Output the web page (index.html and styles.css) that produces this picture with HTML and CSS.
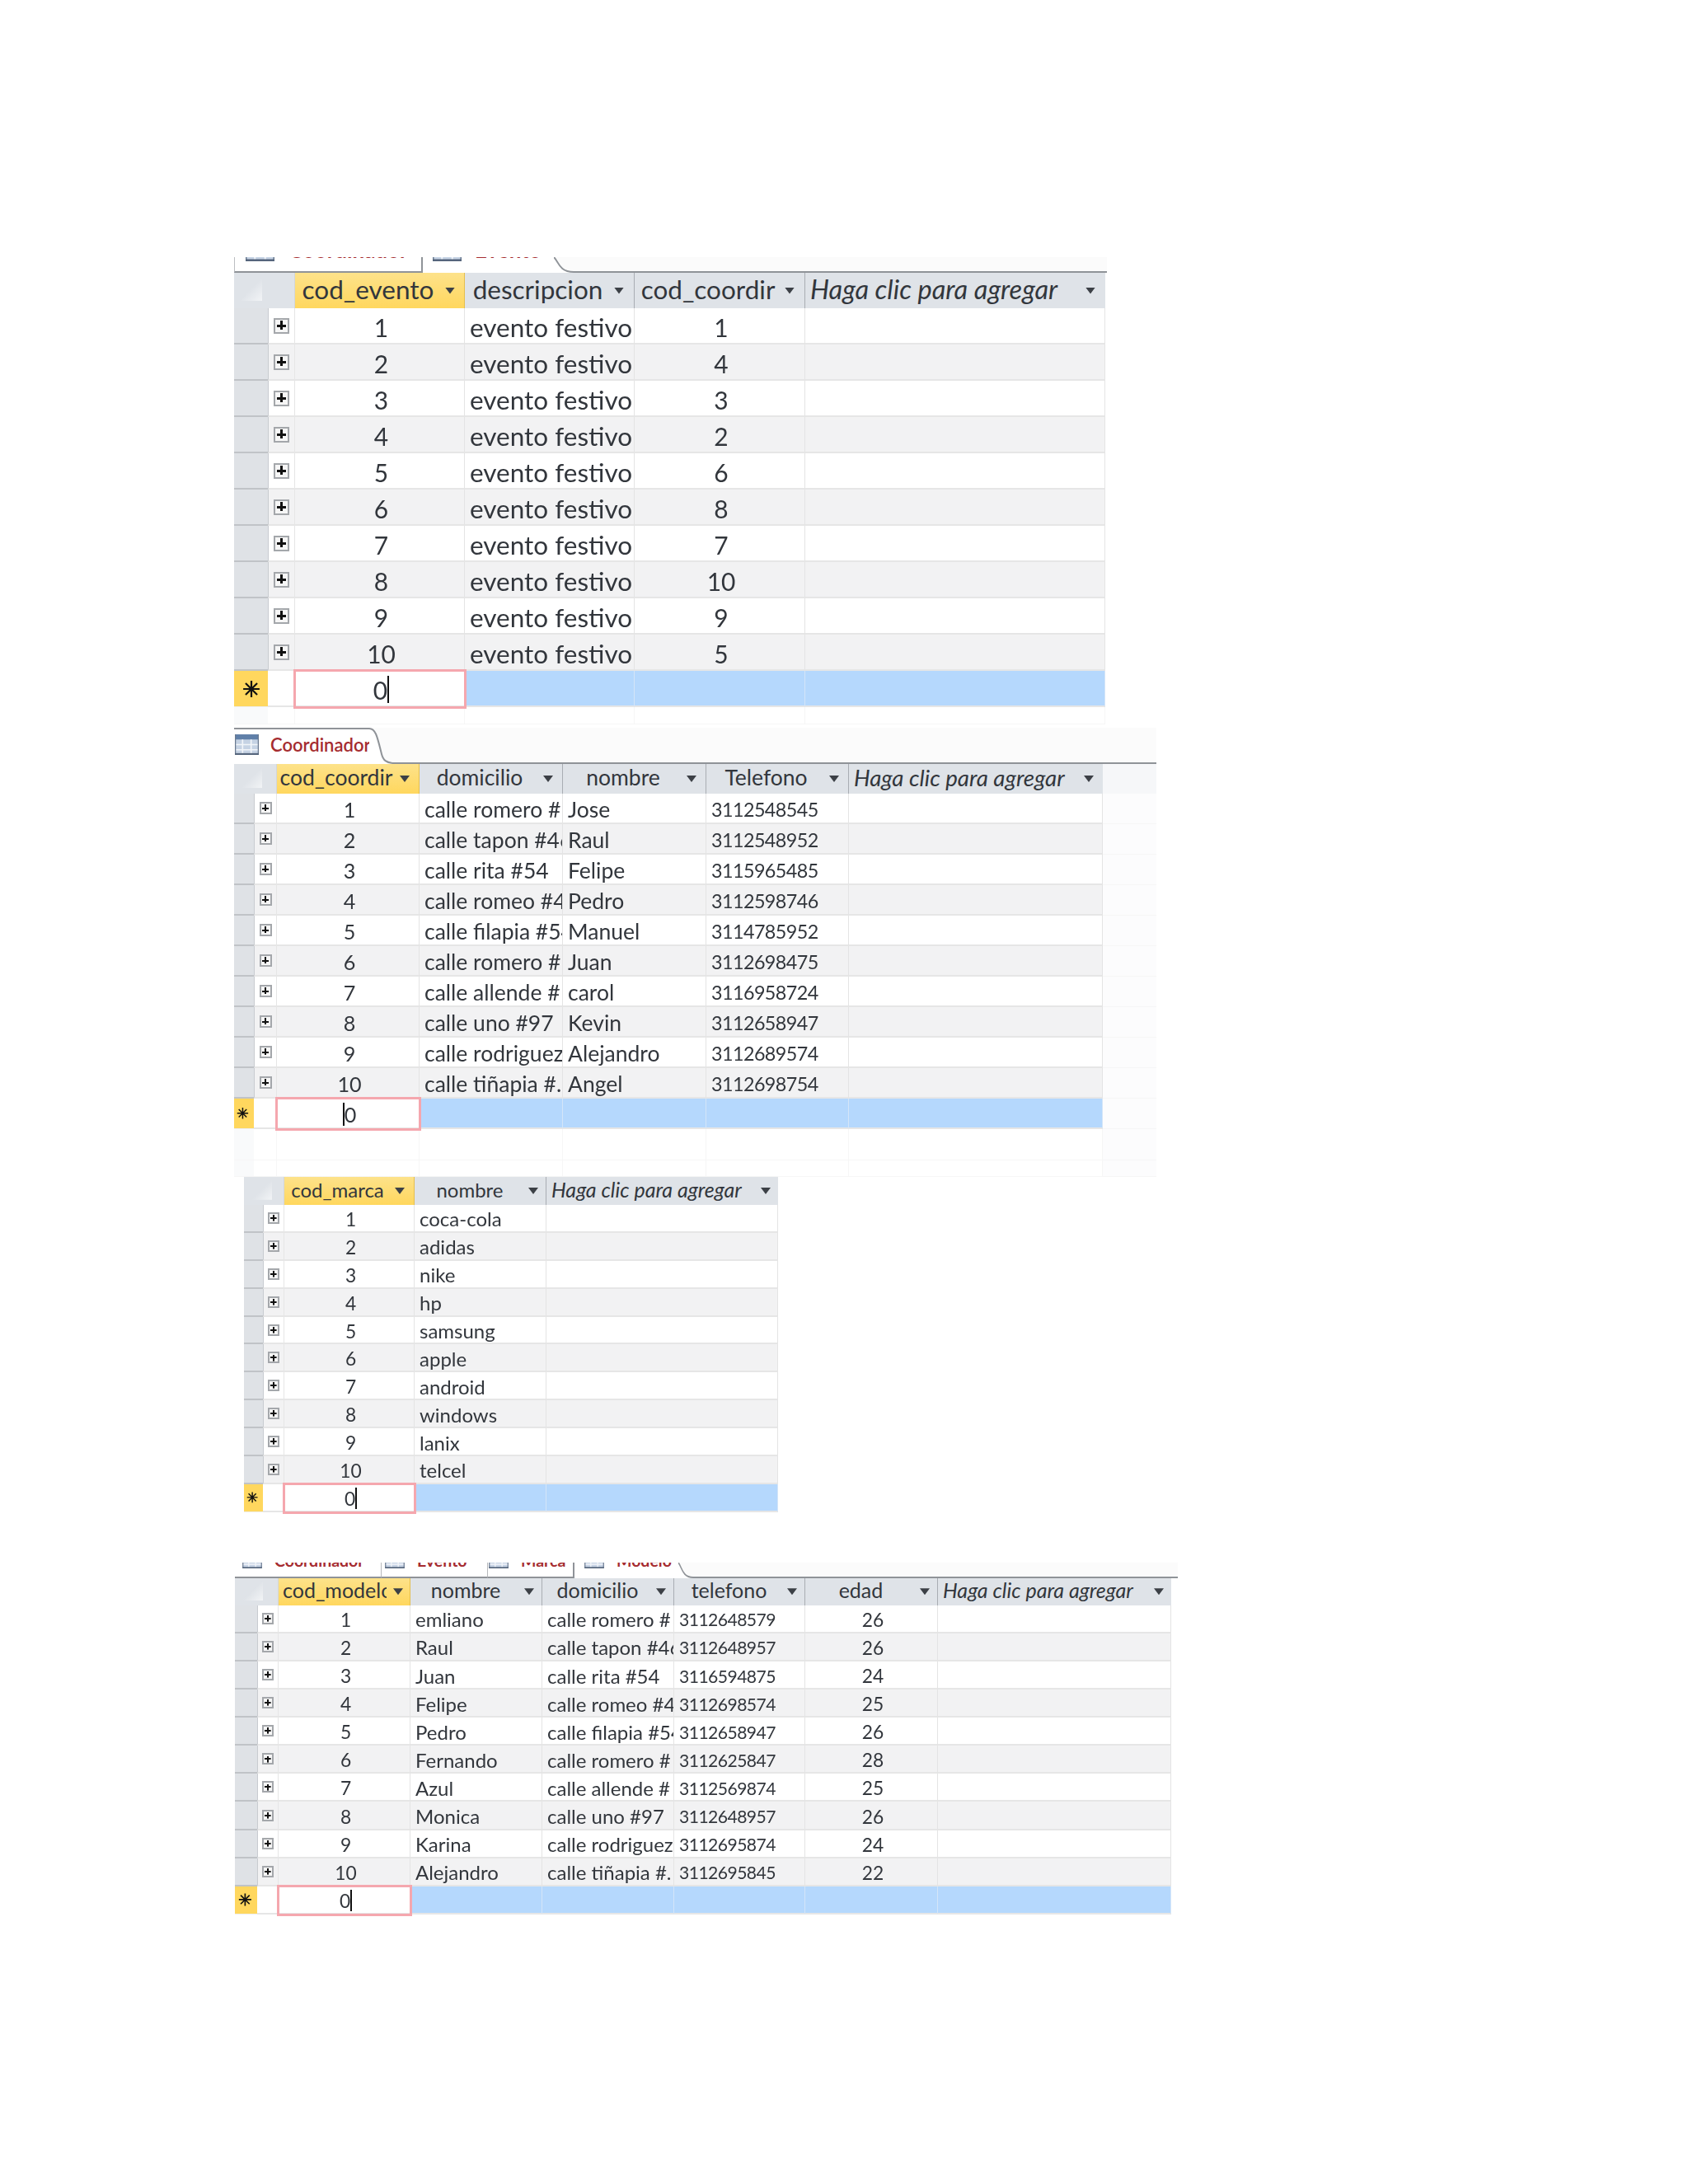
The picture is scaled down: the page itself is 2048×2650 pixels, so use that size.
FILE: index.html
```html
<!DOCTYPE html>
<html lang="es">
<head>
<meta charset="utf-8">
<title>Tablas</title>
<link rel="stylesheet" href="styles.css">
</head>
<body>
<svg class="defs" width="0" height="0" aria-hidden="true">
  <symbol id="ico" viewBox="0 0 28 24">
    <rect x="0" y="0" width="28" height="24" fill="#c6d3e4"/>
    <rect x="0" y="0" width="28" height="6" fill="#5f7fa8"/>
    <path d="M0 12h28M0 18h28M9 6v18M19 6v18" stroke="#f2f5f9" stroke-width="1.6"/>
    <path d="M.5 0v24h27V0" fill="none" stroke="#6a7a90" stroke-width="1.4"/>
    <path d="M0 23h28" stroke="#55657c" stroke-width="2"/>
  </symbol>
  <symbol id="ast" viewBox="0 0 20 20">
    <path d="M10 1v18M1 10h18M3.6 3.6l12.8 12.8M16.4 3.6L3.6 16.4" stroke="#111" stroke-width="2" fill="none"/>
  </symbol>
</svg>
<main class="page">

<section class="sheet s1">
  <div class="tabs">
    <div class="tab off"><svg class="ti"><use href="#ico"/></svg><span class="tl">Coordinador</span></div>
    <div class="tab on"><svg class="ti"><use href="#ico"/></svg><span class="tl">Evento</span></div>
    <svg class="curve" viewBox="0 0 24 20" preserveAspectRatio="none"><path d="M0 0C6 6 6 19 24 19.5V20H0Z" fill="#fff"/><path d="M0 0C6 6 6 18.5 24 19" fill="none" stroke="#8f9398" stroke-width="2"/></svg>
  </div>
  <div class="row head">
    <div class="corner"></div>
    <div class="h pick"><span class="hl">cod_evento</span><i class="arr"></i></div>
    <div class="h"><span class="hl">descripcion</span><i class="arr"></i></div>
    <div class="h"><span class="hl">cod_coordir</span><i class="arr"></i></div>
    <div class="h add"><span class="hl">Haga clic para agregar</span><i class="arr"></i></div>
  </div>
  <div class="row"><div class="sel"></div><div class="exp"><i class="plus"></i></div><div class="c n">1</div><div class="c">evento festivo</div><div class="c n">1</div><div class="c"></div></div>
  <div class="row alt"><div class="sel"></div><div class="exp"><i class="plus"></i></div><div class="c n">2</div><div class="c">evento festivo</div><div class="c n">4</div><div class="c"></div></div>
  <div class="row"><div class="sel"></div><div class="exp"><i class="plus"></i></div><div class="c n">3</div><div class="c">evento festivo</div><div class="c n">3</div><div class="c"></div></div>
  <div class="row alt"><div class="sel"></div><div class="exp"><i class="plus"></i></div><div class="c n">4</div><div class="c">evento festivo</div><div class="c n">2</div><div class="c"></div></div>
  <div class="row"><div class="sel"></div><div class="exp"><i class="plus"></i></div><div class="c n">5</div><div class="c">evento festivo</div><div class="c n">6</div><div class="c"></div></div>
  <div class="row alt"><div class="sel"></div><div class="exp"><i class="plus"></i></div><div class="c n">6</div><div class="c">evento festivo</div><div class="c n">8</div><div class="c"></div></div>
  <div class="row"><div class="sel"></div><div class="exp"><i class="plus"></i></div><div class="c n">7</div><div class="c">evento festivo</div><div class="c n">7</div><div class="c"></div></div>
  <div class="row alt"><div class="sel"></div><div class="exp"><i class="plus"></i></div><div class="c n">8</div><div class="c">evento festivo</div><div class="c n">10</div><div class="c"></div></div>
  <div class="row"><div class="sel"></div><div class="exp"><i class="plus"></i></div><div class="c n">9</div><div class="c">evento festivo</div><div class="c n">9</div><div class="c"></div></div>
  <div class="row alt"><div class="sel"></div><div class="exp"><i class="plus"></i></div><div class="c n">10</div><div class="c">evento festivo</div><div class="c n">5</div><div class="c"></div></div>
  <div class="row new"><div class="sel"><svg class="star"><use href="#ast"/></svg></div><div class="exp"></div><div class="c n edit">0<b class="caret"></b></div><div class="c"></div><div class="c"></div><div class="c"></div></div>
  <div class="row blank"><div class="sel"></div><div class="exp"></div><div class="c"></div><div class="c"></div><div class="c"></div><div class="c"></div></div>
</section>

<section class="sheet s2">
  <div class="tabs">
    <div class="tab on"><svg class="ti"><use href="#ico"/></svg><span class="tl">Coordinador</span></div>
    <svg class="curve" viewBox="0 0 28 44" preserveAspectRatio="none"><path d="M0 1C8 1 10 12 15 32C17 40 21 42 28 43V44H0Z" fill="#fff"/><path d="M0 1C8 1 10 12 15 32C17 40 21 42 28 43" fill="none" stroke="#8f9398" stroke-width="2"/></svg>
  </div>
  <div class="row head">
    <div class="corner"></div>
    <div class="h pick"><span class="hl">cod_coordir</span><i class="arr"></i></div>
    <div class="h"><span class="hl">domicilio</span><i class="arr"></i></div>
    <div class="h"><span class="hl">nombre</span><i class="arr"></i></div>
    <div class="h"><span class="hl">Telefono</span><i class="arr"></i></div>
    <div class="h add"><span class="hl">Haga clic para agregar</span><i class="arr"></i></div>
  </div>
  <div class="row"><div class="sel"></div><div class="exp"><i class="plus"></i></div><div class="c n">1</div><div class="c">calle romero #</div><div class="c">Jose</div><div class="c d">3112548545</div><div class="c"></div></div>
  <div class="row alt"><div class="sel"></div><div class="exp"><i class="plus"></i></div><div class="c n">2</div><div class="c">calle tapon #46</div><div class="c">Raul</div><div class="c d">3112548952</div><div class="c"></div></div>
  <div class="row"><div class="sel"></div><div class="exp"><i class="plus"></i></div><div class="c n">3</div><div class="c">calle rita #54</div><div class="c">Felipe</div><div class="c d">3115965485</div><div class="c"></div></div>
  <div class="row alt"><div class="sel"></div><div class="exp"><i class="plus"></i></div><div class="c n">4</div><div class="c">calle romeo #4</div><div class="c">Pedro</div><div class="c d">3112598746</div><div class="c"></div></div>
  <div class="row"><div class="sel"></div><div class="exp"><i class="plus"></i></div><div class="c n">5</div><div class="c">calle filapia #54</div><div class="c">Manuel</div><div class="c d">3114785952</div><div class="c"></div></div>
  <div class="row alt"><div class="sel"></div><div class="exp"><i class="plus"></i></div><div class="c n">6</div><div class="c">calle romero #</div><div class="c">Juan</div><div class="c d">3112698475</div><div class="c"></div></div>
  <div class="row"><div class="sel"></div><div class="exp"><i class="plus"></i></div><div class="c n">7</div><div class="c">calle allende #</div><div class="c">carol</div><div class="c d">3116958724</div><div class="c"></div></div>
  <div class="row alt"><div class="sel"></div><div class="exp"><i class="plus"></i></div><div class="c n">8</div><div class="c">calle uno #97</div><div class="c">Kevin</div><div class="c d">3112658947</div><div class="c"></div></div>
  <div class="row"><div class="sel"></div><div class="exp"><i class="plus"></i></div><div class="c n">9</div><div class="c">calle rodriguez</div><div class="c">Alejandro</div><div class="c d">3112689574</div><div class="c"></div></div>
  <div class="row alt"><div class="sel"></div><div class="exp"><i class="plus"></i></div><div class="c n">10</div><div class="c">calle tiñapia #.</div><div class="c">Angel</div><div class="c d">3112698754</div><div class="c"></div></div>
  <div class="row new"><div class="sel"><svg class="star"><use href="#ast"/></svg></div><div class="exp"></div><div class="c n edit"><b class="caret"></b>0</div><div class="c"></div><div class="c"></div><div class="c"></div><div class="c"></div></div>
  <div class="row blank"><div class="sel"></div><div class="exp"></div><div class="c"></div><div class="c"></div><div class="c"></div><div class="c"></div><div class="c"></div></div>
  <div class="row blank short"><div class="sel"></div><div class="exp"></div><div class="c"></div><div class="c"></div><div class="c"></div><div class="c"></div><div class="c"></div></div>
</section>

<section class="sheet s3">
  <div class="row head">
    <div class="corner"></div>
    <div class="h pick"><span class="hl">cod_marca</span><i class="arr"></i></div>
    <div class="h"><span class="hl">nombre</span><i class="arr"></i></div>
    <div class="h add"><span class="hl">Haga clic para agregar</span><i class="arr"></i></div>
  </div>
  <div class="row"><div class="sel"></div><div class="exp"><i class="plus"></i></div><div class="c n">1</div><div class="c">coca-cola</div><div class="c"></div></div>
  <div class="row alt"><div class="sel"></div><div class="exp"><i class="plus"></i></div><div class="c n">2</div><div class="c">adidas</div><div class="c"></div></div>
  <div class="row"><div class="sel"></div><div class="exp"><i class="plus"></i></div><div class="c n">3</div><div class="c">nike</div><div class="c"></div></div>
  <div class="row alt"><div class="sel"></div><div class="exp"><i class="plus"></i></div><div class="c n">4</div><div class="c">hp</div><div class="c"></div></div>
  <div class="row"><div class="sel"></div><div class="exp"><i class="plus"></i></div><div class="c n">5</div><div class="c">samsung</div><div class="c"></div></div>
  <div class="row alt"><div class="sel"></div><div class="exp"><i class="plus"></i></div><div class="c n">6</div><div class="c">apple</div><div class="c"></div></div>
  <div class="row"><div class="sel"></div><div class="exp"><i class="plus"></i></div><div class="c n">7</div><div class="c">android</div><div class="c"></div></div>
  <div class="row alt"><div class="sel"></div><div class="exp"><i class="plus"></i></div><div class="c n">8</div><div class="c">windows</div><div class="c"></div></div>
  <div class="row"><div class="sel"></div><div class="exp"><i class="plus"></i></div><div class="c n">9</div><div class="c">lanix</div><div class="c"></div></div>
  <div class="row alt"><div class="sel"></div><div class="exp"><i class="plus"></i></div><div class="c n">10</div><div class="c">telcel</div><div class="c"></div></div>
  <div class="row new"><div class="sel"><svg class="star"><use href="#ast"/></svg></div><div class="exp"></div><div class="c n edit">0<b class="caret"></b></div><div class="c"></div><div class="c"></div></div>
</section>

<section class="sheet s4">
  <div class="tabs">
    <div class="tab off"><svg class="ti"><use href="#ico"/></svg><span class="tl">Coordinador</span></div>
    <div class="tab off mid"><svg class="ti"><use href="#ico"/></svg><span class="tl">Evento</span></div>
    <div class="tab off mid last"><svg class="ti"><use href="#ico"/></svg><span class="tl">Marca</span></div>
    <div class="tab on"><svg class="ti"><use href="#ico"/></svg><span class="tl">Modelo</span></div>
    <svg class="curve" viewBox="0 0 24 20" preserveAspectRatio="none"><path d="M0 0C6 6 6 19 24 19.5V20H0Z" fill="#fff"/><path d="M0 0C6 6 6 18.5 24 19" fill="none" stroke="#8f9398" stroke-width="2"/></svg>
  </div>
  <div class="row head">
    <div class="corner"></div>
    <div class="h pick"><span class="hl">cod_modelo</span><i class="arr"></i></div>
    <div class="h"><span class="hl">nombre</span><i class="arr"></i></div>
    <div class="h"><span class="hl">domicilio</span><i class="arr"></i></div>
    <div class="h"><span class="hl">telefono</span><i class="arr"></i></div>
    <div class="h"><span class="hl">edad</span><i class="arr"></i></div>
    <div class="h add"><span class="hl">Haga clic para agregar</span><i class="arr"></i></div>
  </div>
  <div class="row"><div class="sel"></div><div class="exp"><i class="plus"></i></div><div class="c n">1</div><div class="c">emliano</div><div class="c">calle romero #</div><div class="c d">3112648579</div><div class="c n">26</div><div class="c"></div></div>
  <div class="row alt"><div class="sel"></div><div class="exp"><i class="plus"></i></div><div class="c n">2</div><div class="c">Raul</div><div class="c">calle tapon #46</div><div class="c d">3112648957</div><div class="c n">26</div><div class="c"></div></div>
  <div class="row"><div class="sel"></div><div class="exp"><i class="plus"></i></div><div class="c n">3</div><div class="c">Juan</div><div class="c">calle rita #54</div><div class="c d">3116594875</div><div class="c n">24</div><div class="c"></div></div>
  <div class="row alt"><div class="sel"></div><div class="exp"><i class="plus"></i></div><div class="c n">4</div><div class="c">Felipe</div><div class="c">calle romeo #4</div><div class="c d">3112698574</div><div class="c n">25</div><div class="c"></div></div>
  <div class="row"><div class="sel"></div><div class="exp"><i class="plus"></i></div><div class="c n">5</div><div class="c">Pedro</div><div class="c">calle filapia #54</div><div class="c d">3112658947</div><div class="c n">26</div><div class="c"></div></div>
  <div class="row alt"><div class="sel"></div><div class="exp"><i class="plus"></i></div><div class="c n">6</div><div class="c">Fernando</div><div class="c">calle romero #</div><div class="c d">3112625847</div><div class="c n">28</div><div class="c"></div></div>
  <div class="row"><div class="sel"></div><div class="exp"><i class="plus"></i></div><div class="c n">7</div><div class="c">Azul</div><div class="c">calle allende #</div><div class="c d">3112569874</div><div class="c n">25</div><div class="c"></div></div>
  <div class="row alt"><div class="sel"></div><div class="exp"><i class="plus"></i></div><div class="c n">8</div><div class="c">Monica</div><div class="c">calle uno #97</div><div class="c d">3112648957</div><div class="c n">26</div><div class="c"></div></div>
  <div class="row"><div class="sel"></div><div class="exp"><i class="plus"></i></div><div class="c n">9</div><div class="c">Karina</div><div class="c">calle rodriguez</div><div class="c d">3112695874</div><div class="c n">24</div><div class="c"></div></div>
  <div class="row alt"><div class="sel"></div><div class="exp"><i class="plus"></i></div><div class="c n">10</div><div class="c">Alejandro</div><div class="c">calle tiñapia #.</div><div class="c d">3112695845</div><div class="c n">22</div><div class="c"></div></div>
  <div class="row new"><div class="sel"><svg class="star"><use href="#ast"/></svg></div><div class="exp"></div><div class="c n edit">0<b class="caret"></b></div><div class="c"></div><div class="c"></div><div class="c"></div><div class="c"></div><div class="c"></div></div>
</section>

</main>
</body>
</html>
```
FILE: styles.css
```css
* { box-sizing: border-box; }
html, body { margin: 0; background: #fff; }
.defs { display: block; height: 0; }
.page { height: 2650px; padding-top: 312px; display: flex; flex-direction: column; align-items: flex-start; font-family: Lato, "Noto Sans", sans-serif; color: #32363c; }

.sheet { --fs: 26.5px; --ifs: 27.7px; --rh: 37px; --hh: 36px; --plus: 15px; --arm: 2px; --lift: 3px; --hpr: 11px; filter: blur(.5px); font-size: var(--fs); }
.s1 { --fs: 31.5px; --ifs: 32.5px; --rh: 44px; --hh: 43px; --plus: 19px; --arm: 3px; --hpr: 12px; --cols: 41px 33px 206px 206px 207px 364px 2px; margin-left: 284px; }
.s2 { --cols: 24px 28px 173px 174px 174px 173px 308px 65px; margin: 4px 0 0 284px; }
.s3 { --fs: 24px; --ifs: 25px; --rh: 33.9px; --hh: 34px; --plus: 14px; --lift: 2px; --hpr: 9px; --cols: 23px 26px 158px 160px 281px 4px; margin-left: 296px; }
.s4 { --fs: 24px; --ifs: 25px; --rh: 34.1px; --hh: 33px; --plus: 14px; --lift: 2px; --hpr: 9px; --cols: 27px 26px 160px 160px 160px 159px 161px 283px 8px; margin: 61px 0 0 285px; }

/* tab strip */
.tabs { display: flex; height: 19px; overflow: hidden; background: #fbfbfb; font-weight: 700; color: #a52c30; }
.tabs::after { content: ""; flex: 1; border-bottom: 2px solid #8f9398; }
.s2 .tabs { height: 44px; }
.tab { display: flex; background: #fff; flex: none; height: 100%; }
.tab.off { border-right: 2px solid #8f9398; border-bottom: 2px solid #8f9398; }
.ti { flex: none; }
.tl { white-space: nowrap; }

.s1 .tab { font-size: 26px; line-height: 26px; }
.s1 .tab .ti { width: 35px; height: 30px; margin-top: -25px; }
.s1 .tab .tl { margin-top: -22px; }
.s1 .tab.off { width: 229px; padding-left: 13px; border-left: 1px solid #bcbec2; }
.s1 .tab.off .tl { margin-left: 17px; }
.s1 .tab.on { width: 159px; padding-left: 12px; }
.s1 .tab.on .tl { margin-left: 16px; }
.s1 .curve { width: 24px; height: 19px; flex: none; }

.s2 .tab { align-items: center; font-size: 22px; width: 164px; padding-bottom: 6px; border-top: 2px solid #8f9398; }
.s2 .ti { width: 29px; height: 25px; margin-left: 1px; }
.s2 .tl { margin-left: 14px; font-weight: 600; }
.s2 .curve { width: 28px; height: 44px; flex: none; }

.s4 .tab { font-size: 19.5px; line-height: 20px; }
.s4 .tab .ti { width: 26px; height: 20px; margin-top: -13px; }
.s4 .tab .tl { margin-top: -12px; margin-left: 14px; }
.s4 .tab:nth-child(1) { width: 178px; padding-left: 8px; border-right: 1px solid #b7b9bc; }
.s4 .tab:nth-child(2) { width: 129px; padding-left: 3px; border-right: 1px solid #b7b9bc; }
.s4 .tab.last { width: 105px; padding-left: 0; border-right: 2px solid #8f9398; }
.s4 .tab.on { width: 126px; padding-left: 11px; }
.s4 .tab.on .tl { margin-left: 14px; }
.s4 .curve { width: 18px; height: 19px; flex: none; }

/* grid rows */
.row { display: grid; grid-template-columns: var(--cols); height: var(--rh); }
.row::after { content: ""; background: #fcfcfd; border-bottom: 1px solid #f6f6f6; }

.head { height: var(--hh); background: #dfe3e8; }
.head::after { background: #f6f7f9; border: 0; }
.corner { grid-column: span 2; position: relative; border-right: 1px solid #d3d6da; }
.corner::before { content: ""; position: absolute; left: 8px; top: 4px; width: 65%; height: 70%; max-width: 26px; background: linear-gradient(135deg, #dfe3e8 50%, #f2f4f6 100%); clip-path: polygon(100% 0, 100% 100%, 0 100%); }

.h { display: flex; align-items: center; min-width: 0; padding: 0 var(--hpr) 4px 4px; border-right: 1px solid #a9adb3; white-space: nowrap; overflow: hidden; }
.pick { background: linear-gradient(#fde28a, #ffd75e); border-right: 1px solid #e4bf4e; padding-left: 3px; padding-right: 11px; }
.s4 .h { font-size: 25px; }
.s4 .pick { padding-left: 5px; padding-right: 8px; }
.hl { flex: 1 1 auto; min-width: 0; overflow: hidden; text-align: center; }
.add { border-right: 0; padding-left: 6px; }
.add .hl { text-align: left; font-style: italic; font-size: var(--ifs); }
.arr { flex: none; width: 12px; height: 8px; margin: 4px 0 0 8px; background: #3c4046; clip-path: polygon(0 0, 100% 0, 50% 100%); }

.sel { background: #dfe2e6; border-bottom: 2px solid #c0c3c7; display: flex; align-items: center; justify-content: center; }
.exp { background: #fff; border-left: 1px solid #c8cbd0; border-right: 1px solid #e6e6e6; border-bottom: 2px solid #e6e6e6; display: flex; align-items: center; justify-content: center; }
.c { display: flex; align-items: center; padding: var(--lift) 0 0 6px; background: #fff; border-right: 1px solid #e4e4e4; border-bottom: 2px solid #e6e6e6; white-space: nowrap; overflow: hidden; min-width: 0; }
.n { justify-content: center; padding-left: 4px; font-size: .95em; }
.d { font-size: .88em; letter-spacing: -.55px; }
.alt .exp, .alt .c { background: #f2f2f3; }

.plus { display: block; width: var(--plus); height: var(--plus); border: 2px solid #a4a7ab; background: linear-gradient(#111, #111) center / 76% var(--arm) no-repeat, linear-gradient(#111, #111) center / var(--arm) 76% no-repeat, #f6f6f6; }

.new .sel { background: #ffd75e; border-bottom: 1px solid #eee; }
.new .exp { border-left: 0; }
.new .c { background: #b5d8fd; border-right: 1px solid #d4e5f8; }
.new .edit { background: #fff; outline: 3px solid #f5a7ae; outline-offset: -1px; position: relative; z-index: 1; }
.star { width: 62%; height: 60%; max-width: 22px; max-height: 22px; }
.s2 .star, .s3 .star, .s4 .star { margin-right: 3px; }
.caret { display: inline-block; width: 2px; height: 86%; background: #111; }

.blank { height: 38px; }
.blank .sel { background: #f9fafb; border: 0; border-bottom: 1px solid #f6f6f6; }
.blank .exp, .blank .c { background: #fff; border-color: #f6f6f6; border-left: 0; border-bottom-width: 1px; }
.blank.short { height: 20px; }
.s1 .blank { height: 21px; }
.s1 .row::after, .s3 .row::after, .s4 .row::after { background: #fff; border: 0; }
.s1 .head::after, .s3 .head::after, .s4 .head::after { background: #fff; }
```
